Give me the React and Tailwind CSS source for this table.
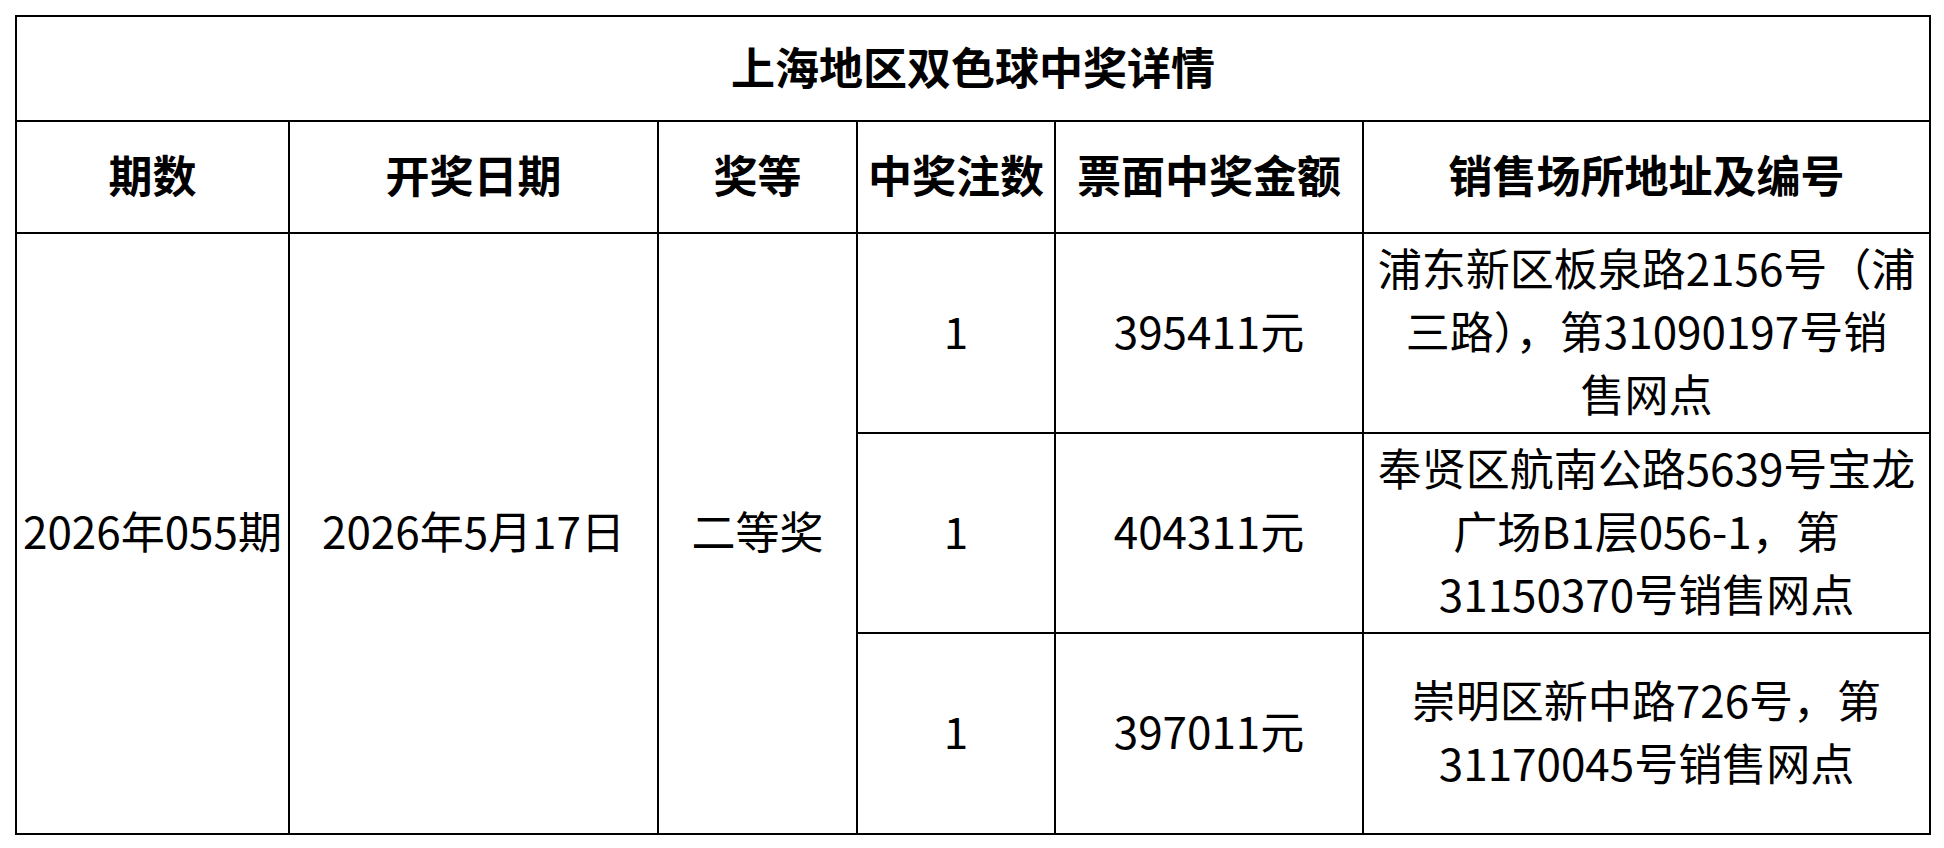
export default function App() {
  const font = { fontFamily: '"Noto Sans CJK SC", "Noto Sans", sans-serif' };
  const cell = "border-2 border-black text-center align-middle px-0 pt-0 pb-[6px]";
  return (
    <div className="w-[1944px] h-[848px] bg-white pt-[15px] pl-[15px]" style={font}>
      <table className="border-collapse table-fixed w-[1914px] text-black text-[44px]">
        <colgroup>
          <col className="w-[273px]" />
          <col className="w-[369px]" />
          <col className="w-[199px]" />
          <col className="w-[198px]" />
          <col className="w-[308px]" />
          <col className="w-[567px]" />
        </colgroup>
        <tbody>
          <tr className="h-[105px]">
            <td colSpan={6} className={`${cell} font-bold leading-none`}>上海地区双色球中奖详情</td>
          </tr>
          <tr className="h-[112px] font-bold leading-none">
            <td className={cell}>期数</td>
            <td className={cell}>开奖日期</td>
            <td className={cell}>奖等</td>
            <td className={`${cell} whitespace-nowrap`}>中奖注数</td>
            <td className={`${cell} whitespace-nowrap`}>票面中奖金额</td>
            <td className={cell}>销售场所地址及编号</td>
          </tr>
          <tr className="h-[200px] leading-[63px]">
            <td rowSpan={3} className={`${cell} whitespace-nowrap`}>2026年055期</td>
            <td rowSpan={3} className={`${cell} whitespace-nowrap`}>2026年5月17日</td>
            <td rowSpan={3} className={cell}>二等奖</td>
            <td className={cell}>1</td>
            <td className={cell}>395411元</td>
            <td className={`${cell} whitespace-nowrap`}>
              浦东新区板泉路2156号（浦<br />三路），第31090197号销<br />售网点
            </td>
          </tr>
          <tr className="h-[200px] leading-[63px]">
            <td className={cell}>1</td>
            <td className={cell}>404311元</td>
            <td className={`${cell} whitespace-nowrap`}>
              奉贤区航南公路5639号宝龙<br />广场B1层056-1，第<br />31150370号销售网点
            </td>
          </tr>
          <tr className="h-[201px] leading-[63px]">
            <td className={cell}>1</td>
            <td className={cell}>397011元</td>
            <td className={`${cell} whitespace-nowrap`}>
              崇明区新中路726号，第<br />31170045号销售网点
            </td>
          </tr>
        </tbody>
      </table>
    </div>
  );
}
